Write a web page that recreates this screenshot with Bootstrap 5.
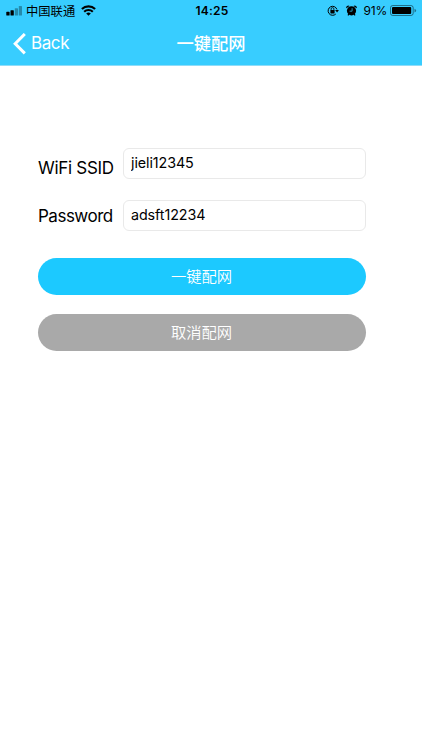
<!DOCTYPE html>
<html lang="zh-CN">
<head>
<meta charset="utf-8">
<meta name="viewport" content="width=device-width, initial-scale=1">
<title>一键配网</title>
<link href="https://cdn.jsdelivr.net/npm/bootstrap@5.3.0/dist/css/bootstrap.min.css" rel="stylesheet">
<style>
body { font-family: Inter, "Noto Sans CJK SC", sans-serif; color: #000; }
.top-area { background: #38cdff; height: 66px; border-bottom: 1px solid #8fdcf8; }
.status-row { display: grid; grid-template-columns: 1fr auto 1fr; height: 22px; padding: 0 5px 0 6px; font-size: 12px; line-height: 22px; }
.status-row svg, .title-row svg { display: block; flex: none; }
.carrier { font-size: 12.3px; margin: 0 6px 0 4px; line-height: 20px; padding-top: 2px; }
.clock { font-weight: 600; letter-spacing: .25px; padding-left: 1px; }
.percent { letter-spacing: -.2px; padding-left: 6px; }
.lock-icon { margin-right: 7px; }
.battery-icon { margin-left: 3px; }
.title-row { display: grid; grid-template-columns: 1fr auto 1fr; height: 43px; padding: 0 13px; }
.back-link { font-size: 17px; line-height: 43px; letter-spacing: -.4px; gap: 5px; }
.page-title { font-size: 17.3px; font-weight: 500; line-height: 43px; margin: 0; }
.setup-form { padding: 82px 56px 0 38px; }
.field-row { height: 31px; }
.field-row + .field-row { margin-top: 21px; }
.field-name { width: 85px; flex: none; font-size: 17px; line-height: 24px; letter-spacing: -.3px; white-space: nowrap; }
.ssid-name { padding-top: 8px; }
.pass-name { padding-top: 4px; letter-spacing: -.5px; }
.field-box, .field-box:focus { height: 31px; padding: 0 7px 2px; border: 1px solid #e9e9e9; border-radius: 6px; font-size: 14.3px; letter-spacing: -.08px; color: #000; box-shadow: none; }
.pill { height: 37px; font-size: 15.3px; font-weight: 350; padding: 1px 1px 0 0; color: #fff; border: 0; }
.pill-go, .pill-go:hover { background: #1cc9ff; color: #fff; margin-top: 27px; }
.pill-stop, .pill-stop:hover { background: #a9a9a9; color: #fff; margin-top: 19px; }
</style>
<script src="https://cdn.jsdelivr.net/npm/bootstrap@5.3.0/dist/js/bootstrap.bundle.min.js"></script>
</head>
<body class="bg-white">
<header class="top-area">
  <div class="status-row">
    <div class="d-flex align-items-center">
      <svg width="16" height="22" viewBox="0 0 16 22"><rect x=".3" y="11.8" width="3.3" height="3.7" rx=".6"/><rect x="4.5" y="10.2" width="3.3" height="5.3" rx=".6"/><g opacity=".32"><rect x="8.8" y="8.2" width="3.2" height="7.3" rx=".6"/><rect x="12.8" y="6" width="3.2" height="9.5" rx=".6"/></g></svg>
      <span class="carrier">中国联通</span>
      <svg width="15" height="22" viewBox="0 0 15 22" fill="none" stroke="#000" stroke-width="2.1"><path d="M.9 9.1a9.3 9.3 0 0 1 13.2 0M3.2 11.7a6.1 6.1 0 0 1 8.6 0"/><path d="M7.5 15.8 5.2 13.5a3.3 3.3 0 0 1 4.6 0z" fill="#000" stroke="none"/></svg>
    </div>
    <span class="clock">14:25</span>
    <div class="d-flex align-items-center justify-content-end">
      <svg class="lock-icon" width="12" height="22" viewBox="0 0 12 22"><path d="M8.8 14A4.5 4.5 0 1 1 9.9 9.4" fill="none" stroke="#000"/><path d="M8.1 10h3.8l-1.8 2.4z"/><rect x="3.4" y="10" width="4.2" height="3.4" rx=".4"/><path d="M4.1 10.2V9a1.4 1.4 0 0 1 2.8 0v1.2" fill="none" stroke="#000" stroke-width=".8"/></svg>
      <svg width="11" height="22" viewBox="0 0 11 22"><circle cx="5.5" cy="10.8" r="4.6"/><path d="M.3 8.3A2.1 2.1 0 0 1 3.5 5.9zM10.7 8.3A2.1 2.1 0 0 0 7.5 5.9zM2.5 13.5l1 1-1.2 1.3-.8-.7zM8.5 13.5l-1 1 1.2 1.3.8-.7z"/><path d="M6.1 8.2v3H3.6" fill="none" stroke="#38cdff" stroke-width=".7"/></svg>
      <span class="percent">91%</span>
      <svg class="battery-icon" width="27" height="22" viewBox="0 0 27 22"><rect x=".5" y="5.5" width="22.7" height="10" rx="2.3" fill="none" stroke="#000" stroke-opacity=".45"/><rect x="2" y="7" width="19.2" height="7" rx="1"/><path d="M24.5 8.8q1.6.4 1.6 1.8t-1.6 1.8z" opacity=".45"/></svg>
    </div>
  </div>
  <nav class="title-row text-white">
    <a href="#" class="back-link d-flex align-items-center text-white text-decoration-none">
      <svg width="13" height="22" viewBox="0 0 13 22" fill="none" stroke="#fff" stroke-width="3"><path d="M11.8 1 2.2 10.7l9.6 9.7"/></svg>
      <span>Back</span>
    </a>
    <h1 class="page-title">一键配网</h1>
  </nav>
</header>
<main>
  <form class="setup-form">
    <div class="field-row d-flex">
      <label class="field-name ssid-name" for="ssid">WiFi SSID</label>
      <input id="ssid" class="field-box form-control" type="text" value="jieli12345">
    </div>
    <div class="field-row d-flex">
      <label class="field-name pass-name" for="pass">Password</label>
      <input id="pass" class="field-box form-control" type="text" value="adsft12234">
    </div>
    <button type="button" class="pill pill-go btn rounded-pill w-100 d-block">一键配网</button>
    <button type="button" class="pill pill-stop btn rounded-pill w-100 d-block">取消配网</button>
  </form>
</main>
</body>
</html>
